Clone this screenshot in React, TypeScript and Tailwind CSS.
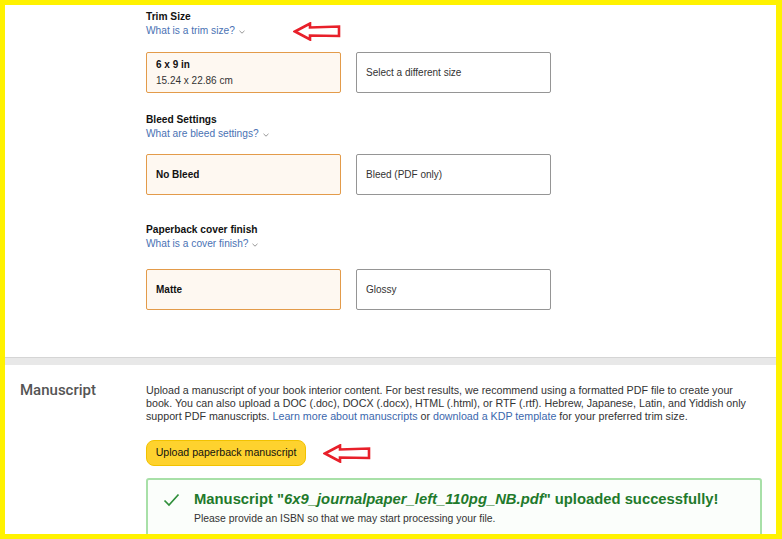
const font = { fontFamily: '"Liberation Sans", Arial, sans-serif' };

function Arrow({ className }: { className: string }) {
  return (
    <svg className={className} width="48" height="19" viewBox="0 0 48 19" fill="none">
      <path
        d="M2 9.5 L17 1.5 L17 5.5 L46 4.5 L46 14 L17 13.5 L17 17.5 Z"
        fill="#fff"
        stroke="#e8202a"
        strokeWidth="2.6"
        strokeLinejoin="miter"
      />
    </svg>
  );
}

function Chevron() {
  return (
    <svg width="6" height="4" viewBox="0 0 6 4" className="ml-[4px] mt-[1px]">
      <path d="M0.5 0.8 L3 3.2 L5.5 0.8" stroke="#8c8c8c" strokeWidth="0.9" fill="none" />
    </svg>
  );
}

function OptionRow({
  selected,
  other,
  mt,
}: {
  selected: React.ReactNode;
  other: string;
  mt: string;
}) {
  return (
    <div className={`flex gap-[15px] ${mt}`}>
      <div className="flex h-[41px] w-[195px] flex-col justify-center rounded-[2px] border border-[#e39b4a] bg-[#fef8f1] px-[9px]">
        {selected}
      </div>
      <div className="flex h-[41px] w-[195px] items-center rounded-[2px] border border-[#959595] bg-white px-[9px] text-[10px] text-[#333]">
        {other}
      </div>
    </div>
  );
}

function Heading({ title, link, mt }: { title: string; link: string; mt: string }) {
  return (
    <div className={mt}>
      <div className="text-[10.2px] font-bold leading-[14px] text-[#111]">{title}</div>
      <div className="flex items-center text-[10.2px] leading-[14px] text-[#4a72b4]">
        {link}
        <Chevron />
      </div>
    </div>
  );
}

export default function App() {
  return (
    <div
      style={font}
      className="h-[539px] w-[782px] overflow-hidden border-t-[5px] border-b-[5px] border-l-[5px] border-r-[6px] border-[#fff200] bg-white"
    >
      <div className="flex h-full flex-col">
        <section className="h-[352px] shrink-0 pl-[141px] pt-[5px]">
          <div className="relative">
            <Heading title="Trim Size" link="What is a trim size?" mt="" />
            <Arrow className="absolute left-[147px] top-[12px]" />
          </div>
          <OptionRow
            mt="mt-[14px]"
            selected={
              <>
                <div className="text-[10px] font-bold leading-[16px] text-[#111]">6 x 9 in</div>
                <div className="text-[10px] leading-[16px] text-[#333]">15.24 x 22.86 cm</div>
              </>
            }
            other="Select a different size"
          />
          <Heading title="Bleed Settings" link="What are bleed settings?" mt="mt-[20px]" />
          <OptionRow
            mt="mt-[13px]"
            selected={<div className="text-[10px] font-bold text-[#111]">No Bleed</div>}
            other="Bleed (PDF only)"
          />
          <Heading title="Paperback cover finish" link="What is a cover finish?" mt="mt-[28px]" />
          <OptionRow
            mt="mt-[18px]"
            selected={<div className="text-[10px] font-bold text-[#111]">Matte</div>}
            other="Glossy"
          />
        </section>

        <div className="h-[8px] shrink-0 border-t border-[#d5d5d5] bg-[#e8e8e8]" />

        <section className="flex min-h-0 flex-1 overflow-hidden pt-[16px]">
          <div
            style={{ fontFamily: 'Roboto, "Liberation Sans", sans-serif' }}
            className="w-[141px] shrink-0 pl-[15px] text-[15px] font-medium leading-[18px] text-[#555]"
          >
            Manuscript
          </div>
          <div className="flex flex-col">
            <p className="mt-[3px] w-[615px] text-[10.7px] leading-[13px] text-[#333]">
              Upload a manuscript of your book interior content. For best results, we recommend using a
              formatted PDF file to create your
              <br />
              book. You can also upload a DOC (.doc), DOCX (.docx), HTML (.html), or RTF (.rtf). Hebrew,
              Japanese, Latin, and Yiddish only
              <br />
              support PDF manuscripts.{" "}
              <span className="text-[#3b67ad]">Learn more about manuscripts</span> or{" "}
              <span className="text-[#3b67ad]">download a KDP template</span> for your preferred trim
              size.
            </p>
            <div className="mt-[17px] flex items-center">
              <button className="h-[26px] w-[160px] rounded-[8px] border border-[#f2c200] bg-[#fed22e] text-[10.6px] text-[#111]">
                Upload paperback manuscript
              </button>
              <Arrow className="ml-[17px] mt-[1px]" />
            </div>
            <div className="mt-[12px] flex h-[70px] w-[616px] shrink-0 gap-[14px] rounded-[3px] border-2 border-[#a8e0a8] bg-[#fbfefb] pl-[15px] pt-[9px]">
              <svg width="17" height="14" viewBox="0 0 17 14" className="mt-[4px]">
                <path d="M1.5 7.5 L6 12 L15.5 1.5" stroke="#2f8f3a" strokeWidth="1.7" fill="none" />
              </svg>
              <div>
                <div className="text-[14.8px] font-bold leading-[20px] text-[#1f7a2b]">
                  Manuscript "<i>6x9_journalpaper_left_110pg_NB.pdf</i>" uploaded successfully!
                </div>
                <div className="mt-[3px] text-[10.4px] leading-[14px] text-[#333]">
                  Please provide an ISBN so that we may start processing your file.
                </div>
              </div>
            </div>
          </div>
        </section>
      </div>
    </div>
  );
}
